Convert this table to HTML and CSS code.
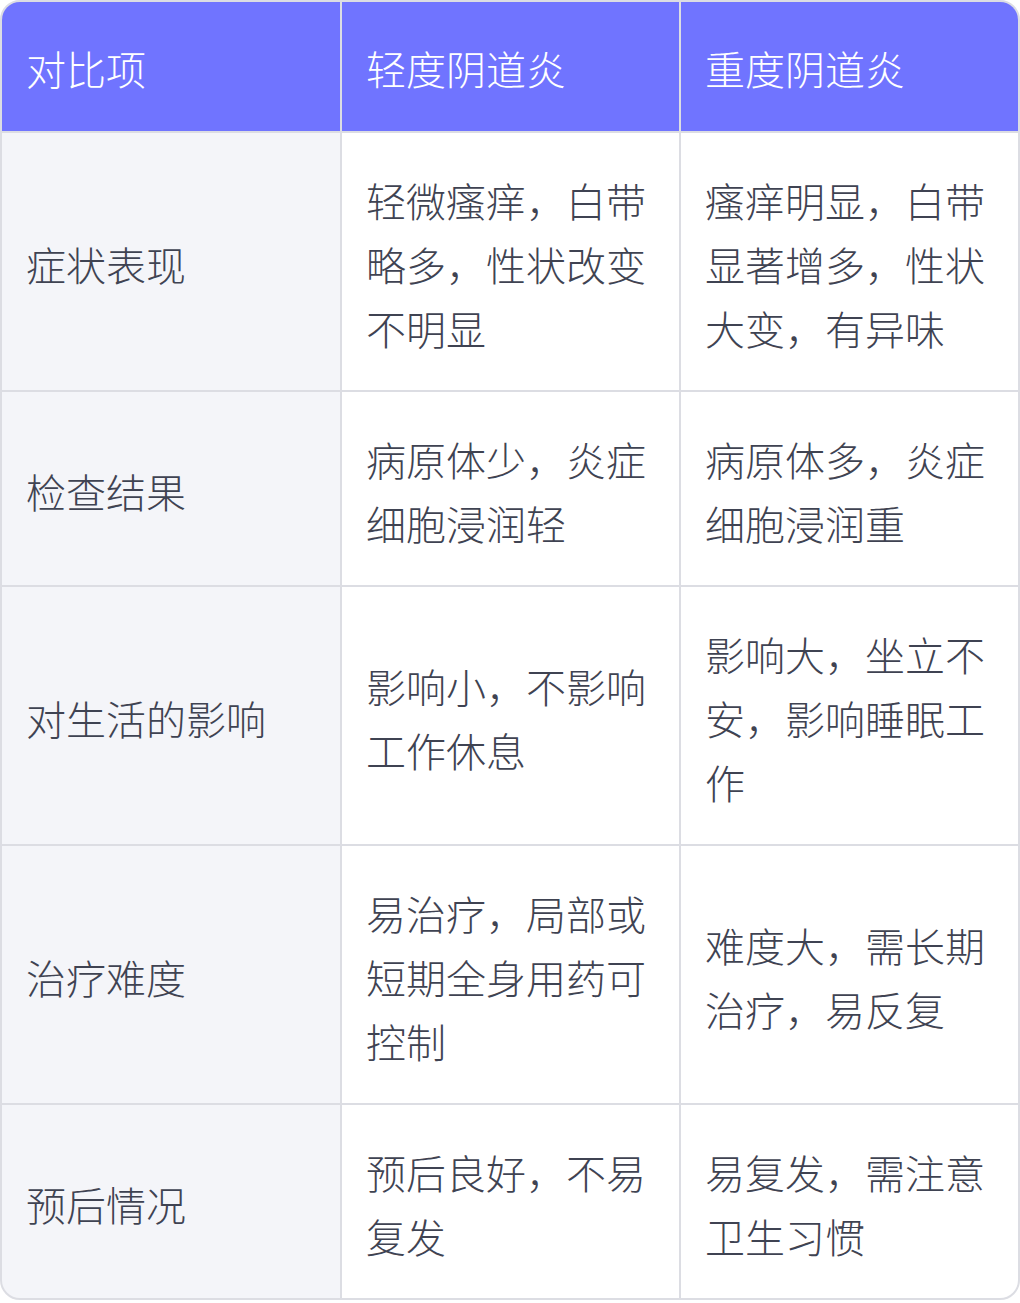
FILE: index.html
```html
<!DOCTYPE html>
<html lang="zh-CN">
<head>
<meta charset="utf-8">
<link rel="stylesheet" href="styles.css">
</head>
<body>
<div class="table">
  <div class="cell head">对比项</div>
  <div class="cell head">轻度阴道炎</div>
  <div class="cell head">重度阴道炎</div>

  <div class="cell label">症状表现</div>
  <div class="cell">轻微瘙痒，白带略多，性状改变不明显</div>
  <div class="cell">瘙痒明显，白带显著增多，性状大变，有异味</div>

  <div class="cell label">检查结果</div>
  <div class="cell">病原体少，炎症细胞浸润轻</div>
  <div class="cell">病原体多，炎症细胞浸润重</div>

  <div class="cell label">对生活的影响</div>
  <div class="cell">影响小，不影响工作休息</div>
  <div class="cell">影响大，坐立不安，影响睡眠工作</div>

  <div class="cell label">治疗难度</div>
  <div class="cell">易治疗，局部或短期全身用药可控制</div>
  <div class="cell">难度大，需长期治疗，易反复</div>

  <div class="cell label">预后情况</div>
  <div class="cell">预后良好，不易复发</div>
  <div class="cell">易复发，需注意卫生习惯</div>
</div>
</body>
</html>
```

FILE: styles.css
```css
html, body {
  margin: 0;
  padding: 0;
  background: #ffffff;
}
body {
  font-family: "Noto Sans CJK SC", "Noto Sans", sans-serif;
}
.table {
  width: 1020px;
  box-sizing: border-box;
  display: grid;
  grid-template-columns: 338px 337px 337px;
  gap: 2px;
  border: 2px solid #dcdde3;
  background: #dcdde3;
  border-radius: 20px;
  overflow: hidden;
}
.cell {
  background: #ffffff;
  color: #3f4352;
  font-size: 40px;
  line-height: 64px;
  padding: 35px 22px 30px 24px;
  display: flex;
  align-items: center;
  font-weight: 300;
}
.cell.head {
  background: #7074ff;
  color: #ffffff;
  padding-top: 34px;
  padding-bottom: 31px;
}
.cell.label {
  background: #f4f5f9;
}
```
